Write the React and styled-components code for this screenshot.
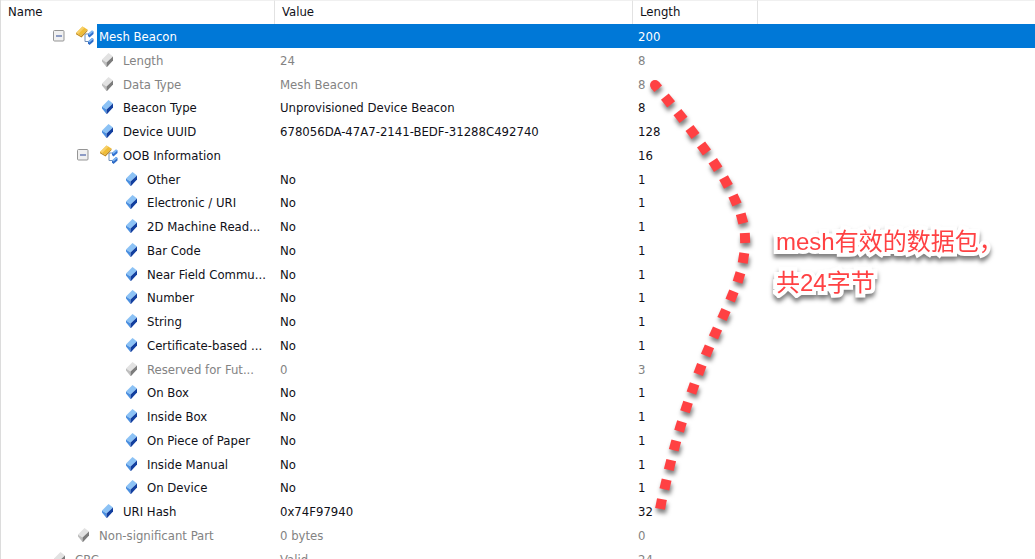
import React from "react";
import styled, { createGlobalStyle } from "styled-components";

const GlobalStyle = createGlobalStyle`
  body { margin: 0; background: #fff; overflow: hidden; }
`;

const Viewer = styled.main`
  position: relative;
  height: 100vh;
  overflow: hidden;
  box-sizing: border-box;
  border-left: 1px solid #dcdcdc;
  font: 13px/24px "DejaVu Sans Condensed", "Noto Sans", sans-serif;
  color: #101018;
`;

const Table = styled.table`
  width: 100%;
  table-layout: fixed;
  border-collapse: separate;
  border-spacing: 0;
`;

const Col = styled.col`
  width: ${(p) => p.$width};
`;

const HeadCell = styled.th`
  height: 24px;
  box-sizing: border-box;
  padding: 0 7px 1px;
  text-align: left;
  font-weight: normal;
  white-space: nowrap;
  border-top: 1px solid #f0f0f0;
  border-right: 1px solid ${(p) => (p.$last ? "transparent" : "#e2e2e2")};
  line-height: 22px;
`;

const Row = styled.tr`
  height: 24px;
  line-height: 21px;
  color: ${(p) => (p.$selected ? "#fff" : p.$muted ? "#838383" : "#101018")};
  &:nth-child(4n + 3) {
    height: 23px;
  }
`;

const Cell = styled.td`
  padding: 2px 5px 0;
  vertical-align: top;
  white-space: nowrap;
  background: ${(p) => (p.$selected ? "#0078d7" : "transparent")};
`;

const NameCell = styled(Cell)`
  height: inherit;
  padding: 0 0 0 ${(p) => p.$level * 24 + 4}px;
  background: transparent;
`;

const NameLine = styled.div`
  display: flex;
  align-items: center;
  height: 100%;
`;

const ToggleSlot = styled.span`
  display: flex;
  flex: none;
  width: 22px;
`;

const Toggle = styled.button`
  display: flex;
  padding: 0;
  border: 0;
  background: none;
`;

const IconSlot = styled.span`
  display: flex;
  flex: none;
  justify-content: center;
  width: 22px;
  padding-right: ${(p) => (p.$branch ? 2 : 5)}px;
  box-sizing: border-box;
`;

const Label = styled.span`
  flex: 1;
  align-self: stretch;
  padding: 2px 0 0 2px;
  background: ${(p) => (p.$selected ? "#0078d7" : "transparent")};
`;

const Overlay = styled.svg`
  position: absolute;
  left: 639px;
  top: 70px;
  overflow: visible;
  pointer-events: none;
  filter: drop-shadow(1px 4px 2px rgba(0, 0, 0, 0.5));
`;

const Note = styled.p`
  position: absolute;
  left: 775px;
  top: 221px;
  margin: 0;
  font: 24px/41px "Liberation Sans", "Noto Sans CJK SC", sans-serif;
  color: #ff4143;
  -webkit-text-stroke: 8px #fff;
  stroke-linejoin: round;
  paint-order: stroke fill;
  filter: drop-shadow(0 4px 2px rgba(0, 0, 0, 0.5));
`;

function CollapseIcon() {
  return (
    <svg width="12" height="12" viewBox="0 0 12 12">
      <rect x="0.5" y="0.5" width="10.5" height="10.5" rx="1" fill="#f0f0f0" stroke="#959595" />
      <path d="M3 6H9" stroke="#4b63a7" strokeWidth="1.2" />
    </svg>
  );
}

function BranchIcon() {
  return (
    <svg width="18" height="20" viewBox="0 0 18 20">
      <path d="M9 8V15.5H13M9 8H13" fill="none" stroke="#6f8fb9" />
      <path d="M0 7L6.5 0.5L11.5 3.5L5 10Z" fill="#f0bd35" />
      <path d="M0 7L6.5 0.5L8.5 1.7L2 8.2Z" fill="#f7d06a" />
      <path d="M5 10L11.5 3.5V5L5.5 11.5L0 8.2V7Z" fill="#c08a1c" />
      <path d="M12 8L16 4.5L17.5 5.5V8L13.5 11.5L12 10Z" fill="#2f6fd0" />
      <path d="M12 8L16 4.5L17.5 5.5L13.5 9Z" fill="#83b9f4" />
      <path d="M12 15.5L16 12L17.5 13V15.5L13.5 19L12 17.5Z" fill="#2e6bc6" />
      <path d="M12 15.5L16 12L17.5 13L13.5 16.5Z" fill="#83b9f4" />
    </svg>
  );
}

function FieldIcon({ muted }) {
  const [top, left, right] = muted
    ? ["#e2e2e2", "#bebebe", "#7c7c7c"]
    : ["#8cc2f5", "#4a8fe0", "#123f9f"];
  return (
    <svg width="11" height="14" viewBox="0 0 11 14">
      <path d="M0 6.5L6.5 0L11 3.5L4.5 9.5Z" fill={top} />
      <path d="M0 6.5L4.5 9.5V14L0 8.5Z" fill={left} />
      <path d="M4.5 9.5L11 3.5V7.5L5 14H4.5Z" fill={right} />
    </svg>
  );
}

const rows = [
  { level: 2, name: "Mesh Beacon", value: "", length: "200", branch: true, selected: true },
  { level: 3, name: "Length", value: "24", length: "8", muted: true },
  { level: 3, name: "Data Type", value: "Mesh Beacon", length: "8", muted: true },
  { level: 3, name: "Beacon Type", value: "Unprovisioned Device Beacon", length: "8" },
  { level: 3, name: "Device UUID", value: "678056DA-47A7-2141-BEDF-31288C492740", length: "128" },
  { level: 3, name: "OOB Information", value: "", length: "16", branch: true },
  { level: 4, name: "Other", value: "No", length: "1" },
  { level: 4, name: "Electronic / URI", value: "No", length: "1" },
  { level: 4, name: "2D Machine Read...", value: "No", length: "1" },
  { level: 4, name: "Bar Code", value: "No", length: "1" },
  { level: 4, name: "Near Field Commu...", value: "No", length: "1" },
  { level: 4, name: "Number", value: "No", length: "1" },
  { level: 4, name: "String", value: "No", length: "1" },
  { level: 4, name: "Certificate-based ...", value: "No", length: "1" },
  { level: 4, name: "Reserved for Fut...", value: "0", length: "3", muted: true },
  { level: 4, name: "On Box", value: "No", length: "1" },
  { level: 4, name: "Inside Box", value: "No", length: "1" },
  { level: 4, name: "On Piece of Paper", value: "No", length: "1" },
  { level: 4, name: "Inside Manual", value: "No", length: "1" },
  { level: 4, name: "On Device", value: "No", length: "1" },
  { level: 3, name: "URI Hash", value: "0x74F97940", length: "32" },
  { level: 2, name: "Non-significant Part", value: "0 bytes", length: "0", muted: true },
  { level: 1, name: "CRC", value: "Valid", length: "24", muted: true },
];

// Centres of the dashes along the bracket, with the angle of each.
const dashes = [
  [28, 30.5, 51], [40.5, 46, 52], [52.5, 62, 53], [64, 78.5, 54], [75.5, 95, 57],
  [86, 112, 61], [95, 130, 66], [102, 148.5, 75], [105, 168, 88], [103.5, 188, 99],
  [99, 207.5, 107], [92, 226, 112], [84, 244.5, 114], [75.5, 263, 114], [67.5, 281, 113],
  [60, 299.5, 111], [53, 318.5, 109], [46.5, 337, 108], [40.5, 356.5, 107], [35, 375.5, 105],
  [30, 395, 104], [25.5, 414.5, 103], [21, 434, 101],
];

function DottedBracket() {
  return (
    <Overlay width="120" height="450" viewBox="0 0 120 450" fill="#ff4143" aria-hidden="true">
      <circle cx="15" cy="15" r="5" />
      <rect x="0" y="-5" width="5" height="10" transform="translate(15 15) rotate(50)" />
      {dashes.map(([x, y, angle]) => (
        <rect key={y} x="-5" y="-5" width="10" height="10" transform={`translate(${x} ${y}) rotate(${angle})`} />
      ))}
    </Overlay>
  );
}

function FieldRow({ item }) {
  const { level, name, value, length, branch, selected, muted } = item;
  return (
    <Row $selected={selected} $muted={muted}>
      <NameCell $level={level}>
        <NameLine>
          <ToggleSlot>
            {branch && (
              <Toggle aria-label={`Collapse ${name}`}>
                <CollapseIcon />
              </Toggle>
            )}
          </ToggleSlot>
          <IconSlot $branch={branch}>{branch ? <BranchIcon /> : <FieldIcon muted={muted} />}</IconSlot>
          <Label $selected={selected}>{name}</Label>
        </NameLine>
      </NameCell>
      <Cell $selected={selected}>{value}</Cell>
      <Cell $selected={selected}>{length}</Cell>
      <Cell $selected={selected} />
    </Row>
  );
}

export default function App() {
  return (
    <>
      <GlobalStyle />
      <Viewer>
        <Table>
          <colgroup>
            <Col $width="274px" />
            <Col $width="358px" />
            <Col $width="125px" />
            <Col $width="auto" />
          </colgroup>
          <thead>
            <tr>
              <HeadCell>Name</HeadCell>
              <HeadCell>Value</HeadCell>
              <HeadCell>Length</HeadCell>
              <HeadCell $last />
            </tr>
          </thead>
          <tbody>
            {rows.map((item, index) => (
              <FieldRow key={index} item={item} />
            ))}
          </tbody>
        </Table>
        <DottedBracket />
        <Note>
          mesh有效的数据包，
          <br />
          共24字节
        </Note>
      </Viewer>
    </>
  );
}
